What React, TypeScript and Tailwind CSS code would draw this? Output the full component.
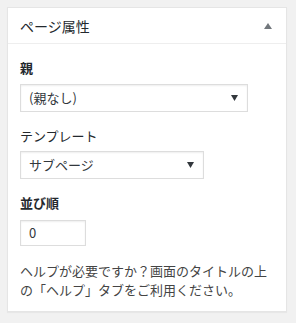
import React from "react";

const jp = { fontFamily: '"Noto Sans CJK JP", "Noto Sans", sans-serif' };

const Caret = ({ className }: { className?: string }) => (
  <svg width="7" height="6" viewBox="0 0 7 6" className={className}>
    <path d="M0 0 L7 0 L3.5 6 Z" fill="currentColor" />
  </svg>
);

const FakeSelect = ({ value, width }: { value: string; width: string }) => (
  <div
    className={`${width} h-[28px] flex items-center justify-between pl-[8px] pr-[9px] bg-white border border-[#ddd] shadow-[inset_0_1px_2px_rgba(0,0,0,0.07)] text-[13px] text-[#32373c]`}
  >
    <span>{value}</span>
    <Caret className="text-[#32373c]" />
  </div>
);

export default function App() {
  return (
    <div className="min-h-[323px] bg-[#f1f1f1] pt-[7px] pl-[7px]" style={jp}>
      <div className="w-[280px] bg-white border border-[#e5e5e5] shadow-[0_1px_1px_rgba(0,0,0,0.04)]">
        {/* Header */}
        <div className="h-[36px] border-b border-[#eee] flex items-center justify-between pl-[12px] pr-[14px]">
          <h2 className="text-[14px] leading-none text-[#23282d]">ページ属性</h2>
          <svg width="8" height="6" viewBox="0 0 8 6" className="text-[#72777c]">
            <path d="M0 6 L4 0 L8 6 Z" fill="currentColor" />
          </svg>
        </div>

        {/* Body */}
        <div className="px-[12px] pb-[11px] text-[13px] leading-[19.5px] text-[#444]">
          <p className="mt-[14px] font-bold text-[#23282d]">親</p>
          <div className="mt-[6px]">
            <FakeSelect value="(親なし)" width="w-[228px]" />
          </div>

          <p className="mt-[14px] text-[#23282d]">テンプレート</p>
          <div className="mt-[6px]">
            <FakeSelect value="サブページ" width="w-[184px]" />
          </div>

          <p className="mt-[14px] font-bold text-[#23282d]">並び順</p>
          <div className="mt-[7px] w-[66px] h-[26px] flex items-center pl-[8px] border border-[#ddd] shadow-[inset_0_1px_2px_rgba(0,0,0,0.07)] text-[#32373c]">
            0
          </div>

          <p className="mt-[15px] text-[#444]">
            ヘルプが必要ですか？画面のタイトルの上の「ヘルプ」タブをご利用ください。
          </p>
        </div>
      </div>
    </div>
  );
}
